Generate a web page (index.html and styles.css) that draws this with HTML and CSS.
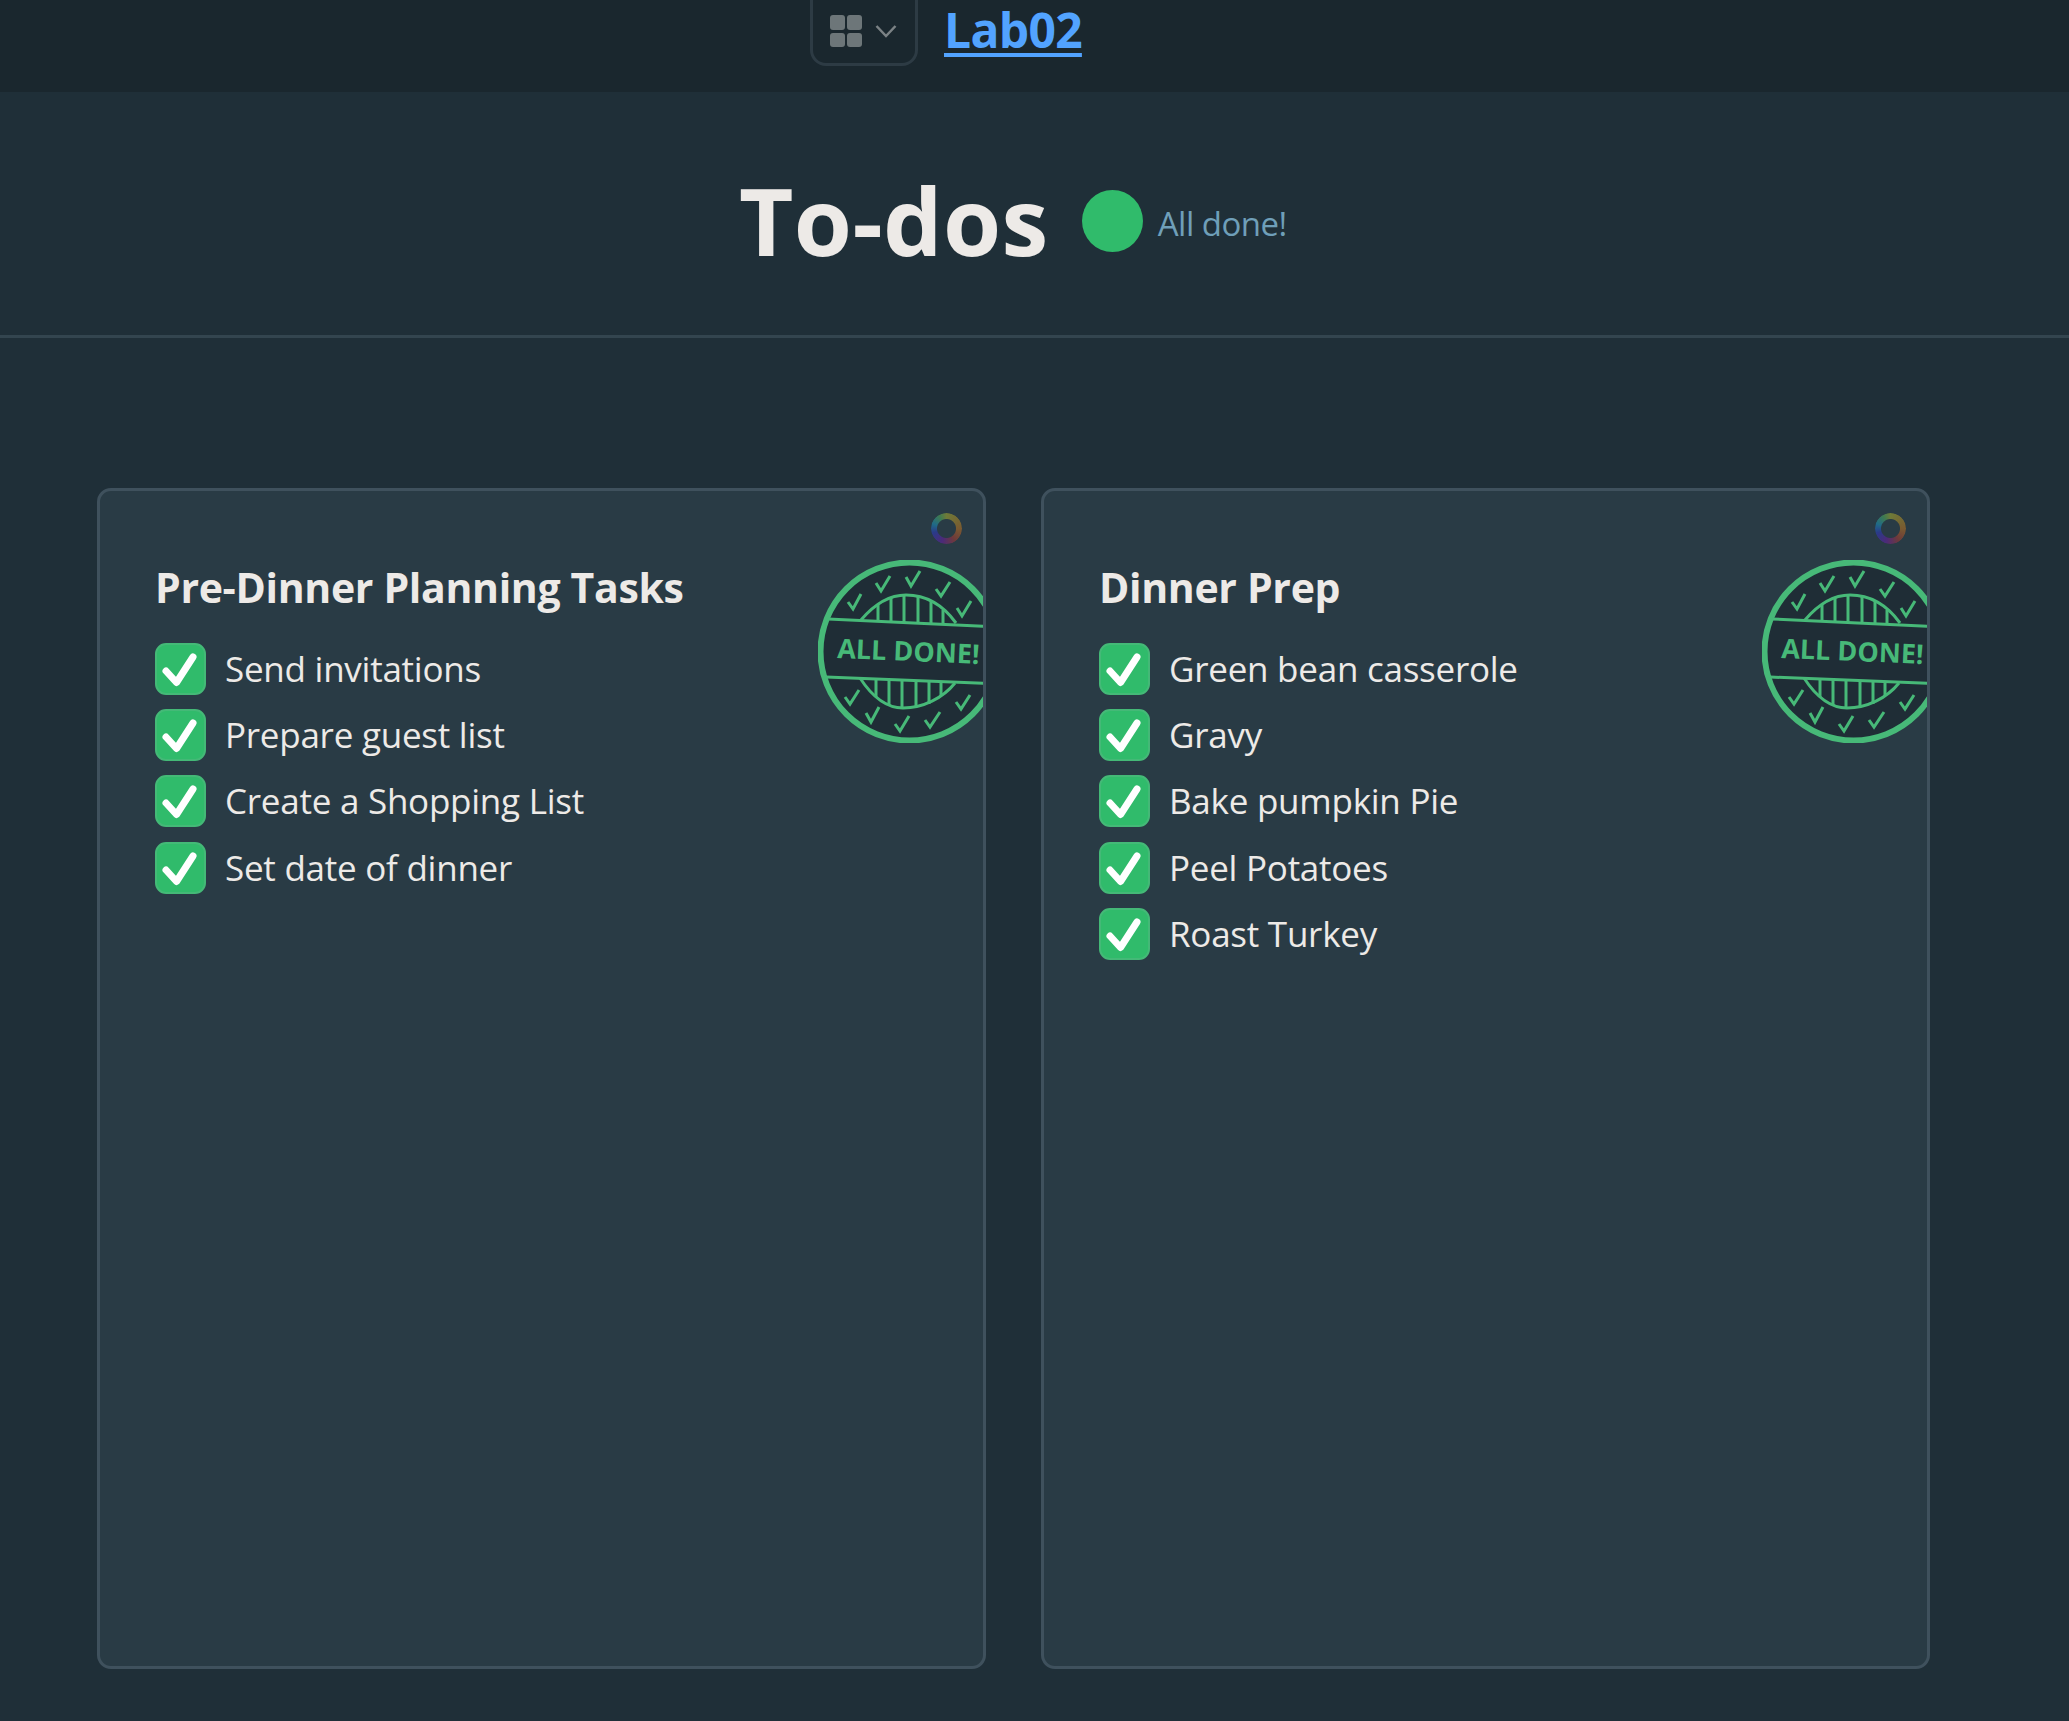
FILE: index.html
```html
<!DOCTYPE html>
<html lang="en">
<head>
  <meta charset="UTF-8">
  <meta name="viewport" content="width=device-width, initial-scale=1.0">
  <title>To-dos</title>
  <link rel="stylesheet" href="styles.css">
</head>
<body>

  <nav class="topbar">
    <button class="app-switch">
      <svg class="grid-icon" viewBox="0 0 32 32" width="32" height="32">
        <rect x="0" y="0" width="15" height="15" rx="3"></rect>
        <rect x="17" y="0" width="15" height="15" rx="3"></rect>
        <rect x="0" y="18" width="15" height="14" rx="3"></rect>
        <rect x="17" y="18" width="15" height="14" rx="3"></rect>
      </svg>
      <svg class="chevron-icon" viewBox="0 0 22 14" width="22" height="14">
        <path d="M1.5 2 L11 12 L20.5 2"></path>
      </svg>
    </button>
    <a class="project-link" href="#">Lab02</a>
  </nav>

  <header class="page-head">
    <h1>To-dos</h1>
    <span class="status-dot"></span>
    <span class="status-text">All done!</span>
  </header>

  <main class="boards">
    <section class="card">
      <span class="ring"></span>
      <svg class="stamp" viewBox="0 0 183 183" width="183" height="183">
        <circle class="stamp-disc" cx="91.5" cy="91.5" r="89"></circle>
        <path class="stamp-line" d="M43 60 C60 40 75 35 88 35 C108 35 125 45 138 63"></path>
        <path class="stamp-line" d="M60 44 V61 M73 38 V62 M86 35 V62 M100 36 V63 M113 41 V64 M125 50 V64"></path>
        <path class="stamp-line" d="M42 118 C55 138 70 148 85 148 C105 148 125 138 137 123"></path>
        <path class="stamp-line" d="M58 118 V137 M71 119 V145 M84 119 V148 M98 120 V147 M111 121 V144 M123 122 V136"></path>
        <path class="stamp-line" d="M10 59 L183 67 M8 117 L183 124"></path>
        <path class="stamp-tick" d="M30 42 L35 49 L43 34 M58 23 L63 31 L72 16 M88 17 L93 26 L102 11 M118 29 L123 36 L132 22 M139 48 L144 56 L153 41"></path>
        <path class="stamp-tick" d="M27 137 L32 144 L41 130 M48 153 L53 162 L61 147 M77 164 L82 171 L91 156 M107 160 L112 167 L122 152 M138 142 L143 149 L152 135"></path>
        <text class="stamp-text" x="19" y="98" transform="rotate(2.4 19 98)">ALL DONE!</text>
      </svg>
      <h2>Pre-Dinner Planning Tasks</h2>
      <ul class="todo-list">
        <li class="todo"><span class="check"><svg viewBox="0 0 51 51" width="51" height="51"><path d="M11 28 L21.5 39.5 L38 14"></path></svg></span>Send invitations</li>
        <li class="todo"><span class="check"><svg viewBox="0 0 51 51" width="51" height="51"><path d="M11 28 L21.5 39.5 L38 14"></path></svg></span>Prepare guest list</li>
        <li class="todo"><span class="check"><svg viewBox="0 0 51 51" width="51" height="51"><path d="M11 28 L21.5 39.5 L38 14"></path></svg></span>Create a Shopping List</li>
        <li class="todo"><span class="check"><svg viewBox="0 0 51 51" width="51" height="51"><path d="M11 28 L21.5 39.5 L38 14"></path></svg></span>Set date of dinner</li>
      </ul>
    </section>

    <section class="card">
      <span class="ring"></span>
      <svg class="stamp" viewBox="0 0 183 183" width="183" height="183">
        <circle class="stamp-disc" cx="91.5" cy="91.5" r="89"></circle>
        <path class="stamp-line" d="M43 60 C60 40 75 35 88 35 C108 35 125 45 138 63"></path>
        <path class="stamp-line" d="M60 44 V61 M73 38 V62 M86 35 V62 M100 36 V63 M113 41 V64 M125 50 V64"></path>
        <path class="stamp-line" d="M42 118 C55 138 70 148 85 148 C105 148 125 138 137 123"></path>
        <path class="stamp-line" d="M58 118 V137 M71 119 V145 M84 119 V148 M98 120 V147 M111 121 V144 M123 122 V136"></path>
        <path class="stamp-line" d="M10 59 L183 67 M8 117 L183 124"></path>
        <path class="stamp-tick" d="M30 42 L35 49 L43 34 M58 23 L63 31 L72 16 M88 17 L93 26 L102 11 M118 29 L123 36 L132 22 M139 48 L144 56 L153 41"></path>
        <path class="stamp-tick" d="M27 137 L32 144 L41 130 M48 153 L53 162 L61 147 M77 164 L82 171 L91 156 M107 160 L112 167 L122 152 M138 142 L143 149 L152 135"></path>
        <text class="stamp-text" x="19" y="98" transform="rotate(2.4 19 98)">ALL DONE!</text>
      </svg>
      <h2>Dinner Prep</h2>
      <ul class="todo-list">
        <li class="todo"><span class="check"><svg viewBox="0 0 51 51" width="51" height="51"><path d="M11 28 L21.5 39.5 L38 14"></path></svg></span>Green bean casserole</li>
        <li class="todo"><span class="check"><svg viewBox="0 0 51 51" width="51" height="51"><path d="M11 28 L21.5 39.5 L38 14"></path></svg></span>Gravy</li>
        <li class="todo"><span class="check"><svg viewBox="0 0 51 51" width="51" height="51"><path d="M11 28 L21.5 39.5 L38 14"></path></svg></span>Bake pumpkin Pie</li>
        <li class="todo"><span class="check"><svg viewBox="0 0 51 51" width="51" height="51"><path d="M11 28 L21.5 39.5 L38 14"></path></svg></span>Peel Potatoes</li>
        <li class="todo"><span class="check"><svg viewBox="0 0 51 51" width="51" height="51"><path d="M11 28 L21.5 39.5 L38 14"></path></svg></span>Roast Turkey</li>
      </ul>
    </section>
  </main>

</body>
</html>
```

FILE: styles.css
```css
* {
  box-sizing: border-box;
}
body {
  margin: 0;
  height: 1721px;
  overflow: hidden;
  background: #1f2f38;
  color: #edeae7;
  font-family: "Open Sans", "Noto Sans", sans-serif;
}

.topbar {
  height: 92px;
  padding: 0 0 26px 810px;
  display: flex;
  align-items: flex-end;
  gap: 26px;
  background: #1a272e;
}
.app-switch {
  width: 108px;
  height: 90px;
  padding: 0 0 16px 17px;
  display: flex;
  align-items: flex-end;
  gap: 13px;
  background: none;
  border: 3px solid #2d3b44;
  border-radius: 16px;
}
.grid-icon rect {
  fill: #6d7679;
}
.chevron-icon {
  margin-bottom: 9px;
}
.chevron-icon path {
  fill: none;
  stroke: #7b8285;
  stroke-width: 2.5;
}
.project-link {
  height: 54px;
  margin-bottom: 9px;
  color: #52a3ff;
  font-size: 48px;
  font-weight: 700;
  line-height: 54px;
  letter-spacing: -0.7px;
  text-decoration: underline;
  text-decoration-thickness: 4px;
  text-underline-offset: 5px;
}

.page-head {
  height: 246px;
  padding: 12px 0 0 739px;
  display: flex;
  align-items: center;
  border-bottom: 3px solid #33454f;
}
.page-head h1 {
  margin: 0;
  font-size: 94px;
  font-weight: 700;
  line-height: 130px;
  letter-spacing: 0.4px;
}
.status-dot {
  width: 61px;
  height: 62px;
  margin: 2px 15px 0 33px;
  border-radius: 50%;
  background: #30bb6b;
}
.status-text {
  margin-top: 8px;
  color: #6f9fb9;
  font-size: 33px;
  letter-spacing: -0.5px;
}

.boards {
  padding: 150px 0 0 97px;
  display: grid;
  grid-template-columns: 889px 889px;
  gap: 55px;
}
.card {
  position: relative;
  height: 1181px;
  padding: 68px 0 0 55px;
  overflow: hidden;
  background: #293b45;
  border: 3px solid #3f515d;
  border-radius: 14px;
}
.card h2 {
  margin: 0 0 27.6px;
  font-size: 41px;
  font-weight: 700;
  line-height: 56px;
  letter-spacing: -0.33px;
}

.todo-list {
  margin: 0;
  padding: 0;
  list-style: none;
}
.todo {
  height: 66.4px;
  display: flex;
  align-items: flex-start;
  gap: 19px;
  font-size: 35px;
  line-height: 51px;
  letter-spacing: -0.25px;
}
.check {
  flex: none;
  width: 51px;
  height: 52px;
  background: #30bb6b;
  border: 2px solid #44b977;
  border-radius: 11px;
}
.check svg {
  display: block;
  margin: -2px;
}
.check path {
  fill: none;
  stroke: #fff;
  stroke-width: 7;
  stroke-linecap: round;
  stroke-linejoin: round;
}

/* sits over the card corner */
.ring {
  position: absolute;
  top: 22px;
  right: 21px;
  width: 31px;
  height: 31px;
  border-radius: 50%;
  background: conic-gradient(#6e7a38, #7a5a30 25%, #6e3a3a 40%, #4c2a78 55%, #2a3a88 70%, #1f6a88 80%, #3f7a50 92%, #6e7a38);
  -webkit-mask: radial-gradient(circle, transparent 9px, #000 10px);
  mask: radial-gradient(circle, transparent 9px, #000 10px);
}
.stamp {
  position: absolute;
  top: 69px;
  left: 718px;
}
.stamp-disc {
  fill: #1f2d36;
  stroke: #47b978;
  stroke-width: 6;
}
.stamp-line {
  fill: none;
  stroke: #47b978;
  stroke-width: 3;
}
.stamp-tick {
  fill: none;
  stroke: #47b978;
  stroke-width: 3;
}
.stamp-text {
  fill: #47b978;
  font-family: "Open Sans", sans-serif;
  font-size: 27px;
  font-weight: 700;
}
```
